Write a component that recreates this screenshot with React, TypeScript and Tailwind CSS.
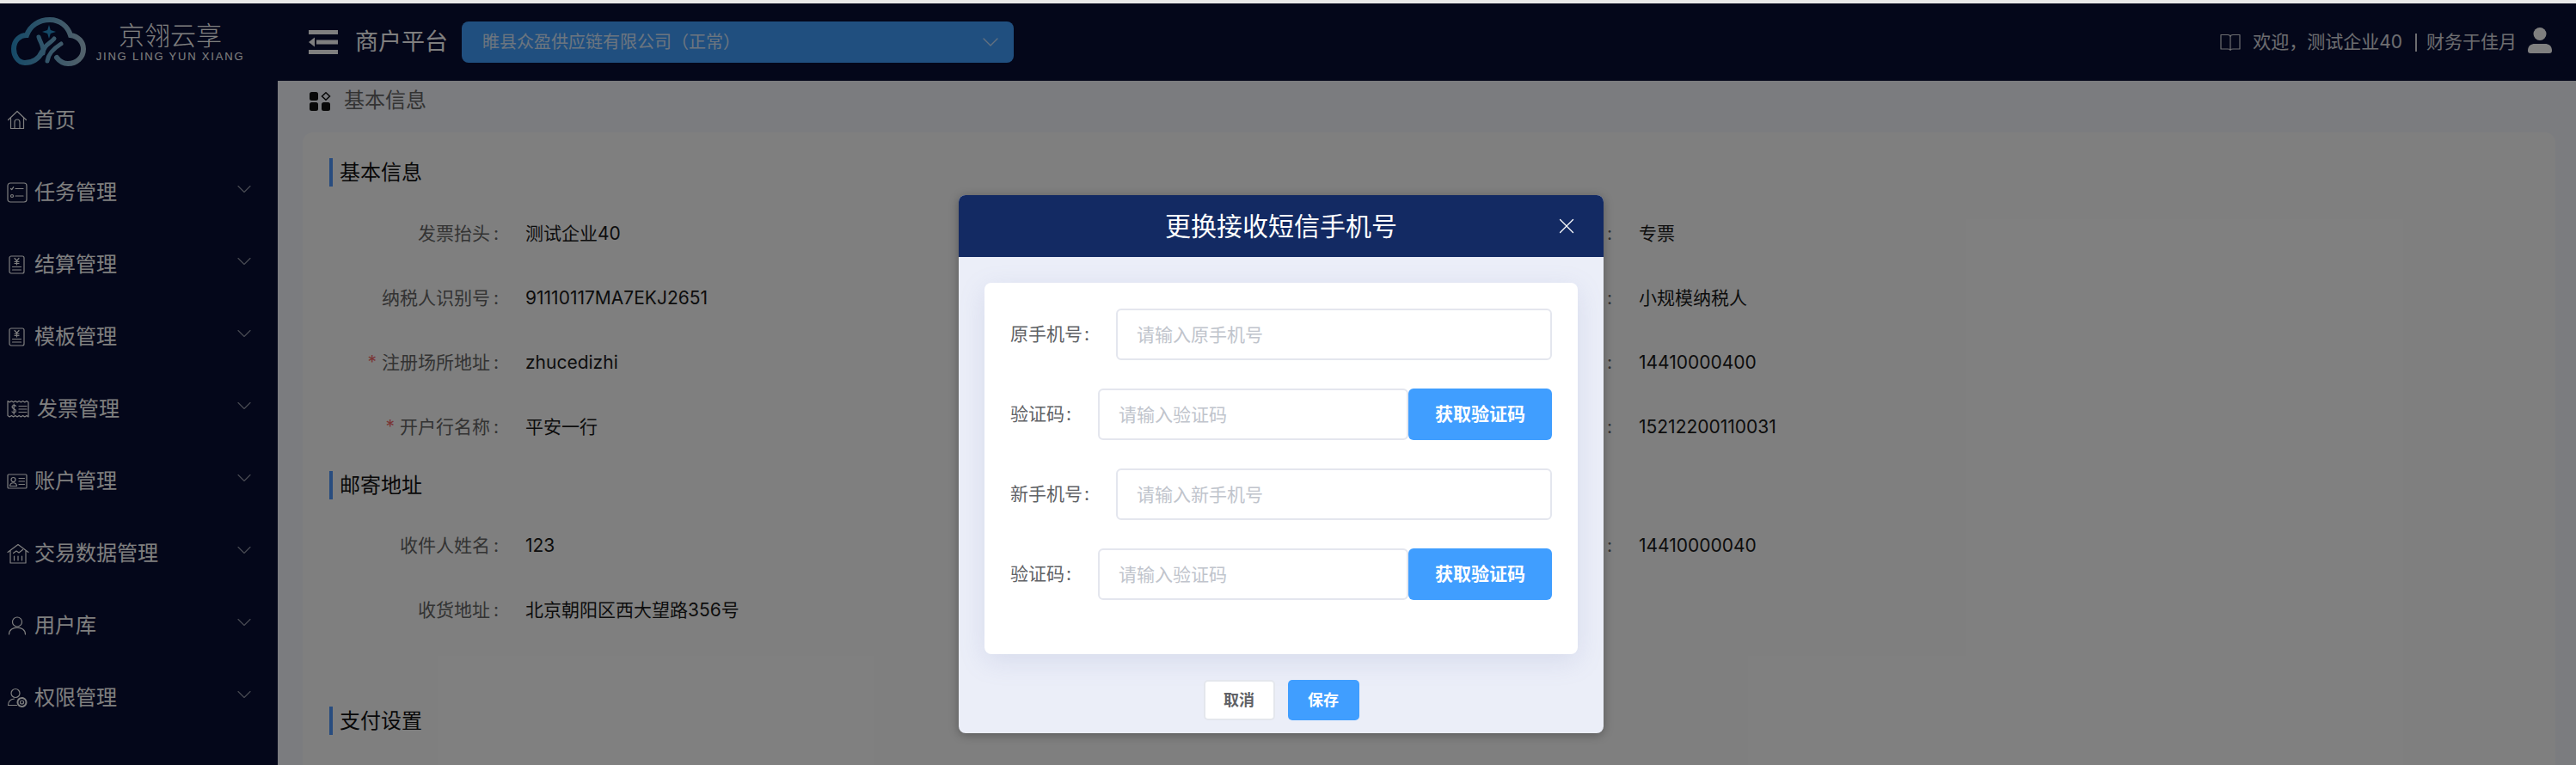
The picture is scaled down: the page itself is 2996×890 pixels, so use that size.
import { ChevronDown, X } from "lucide-react";

const stroke = { fill: "none", stroke: "currentColor", strokeWidth: 1.2, strokeLinecap: "round" as const, strokeLinejoin: "round" as const };

const HomeIcon = () => (
  <svg width="24" height="24" viewBox="0 0 24 24" {...stroke}>
    <path d="M1.5 11.5 12 1.5l10.5 10M4.5 9.5V21.500h15V9.500" />
    <path d="M9 21.500V14a3 3 0 0 1 6 0v7.500" />
  </svg>
);
const TaskIcon = () => (
  <svg width="24" height="24" viewBox="0 0 24 24" {...stroke}>
    <rect x="1" y="1" width="22" height="22" rx="3" />
    <path d="m4.500 7.500 1.200 1.200 2-3M10 7.500h9M10 16h9" />
    <circle cx="6" cy="16" r="1.500" />
  </svg>
);
const BillIcon = () => (
  <svg width="24" height="24" viewBox="0 0 24 24" {...stroke}>
    <rect x="3" y="2" width="17" height="20" rx="2" />
    <path d="m9 4.500 2.500 3 2.500-3M11.500 7.500v4.500M9 8.500h5M9 10.500h5M6.500 14.500h10M6.500 18h10" />
  </svg>
);
const InvoiceIcon = () => (
  <svg width="28" height="24" viewBox="0 0 28 24" {...stroke}>
    <path d="M1 2.500l2.200 1.500 2.200-1.500 2.200 1.500 2.200-1.500 2.200 1.500 2.200-1.500 2.200 1.500 2.200-1.500 2.200 1.500 2.200-1.500 2 1.500v17l-2-1.500-2.200 1.500-2.200-1.500-2.200 1.500-2.200-1.500-2.200 1.500-2.200-1.500-2.200 1.500-2.200-1.500-2.200 1.500-2.200-1.500z" />
    <path d="M10.500 8.500C9.500 7 6 7 6 9.500s4.500 2 4.500 4.500-3.500 2.500-4.500 1M8.200 6v12M14 8.500h9M14 12h9M14 15.500h9" />
  </svg>
);
const AccountIcon = () => (
  <svg width="24" height="24" viewBox="0 0 24 24" {...stroke}>
    <rect x="1" y="4" width="22" height="16" rx="1" />
    <circle cx="7.500" cy="10" r="2.500" />
    <path d="M3.500 17.500c.5-5 7.500-5 8 0zM14 8.500h6.500M14 12h6.500M14 15.500h6.500" />
  </svg>
);
const TradeIcon = () => (
  <svg width="26" height="24" viewBox="0 0 26 24" {...stroke}>
    <path d="M1 10.500 13 1.500l12 9M4 8.500V23h18V8.500" />
    <path d="M7.500 11.500l3.500-2.500 3 2 4.500-3.500M8.500 20v-5M13 20v-5M17.500 20v-5" />
  </svg>
);
const UserIcon = () => (
  <svg width="24" height="24" viewBox="0 0 24 24" {...stroke}>
    <circle cx="12" cy="7.500" r="5.500" />
    <path d="M2.500 22c0-10.500 19-10.500 19 0" />
  </svg>
);
const RoleIcon = () => (
  <svg width="24" height="24" viewBox="0 0 24 24" {...stroke}>
    <circle cx="10" cy="6.500" r="5" />
    <path d="M1.500 20.500c0-5 3-7 7-7.500M1.500 20.500h10" />
    <circle cx="17.500" cy="17" r="5" strokeDasharray="2.500 1" strokeWidth="2" />
    <circle cx="17.500" cy="17" r="2" />
  </svg>
);
const BookIcon = () => (
  <svg width="24" height="22" viewBox="0 0 24 22" {...stroke}>
    <path d="M1 2.500h8c1.700 0 3 1 3 2.500v15.500c0-1-1.300-1.500-3-1.500H1zM23 2.500h-8c-1.700 0-3 1-3 2.500M23 2.500V19h-8c-1.700 0-3 .5-3 1.500" />
  </svg>
);
const PersonSolid = () => (
  <svg width="28" height="30" viewBox="0 0 28 30" fill="currentColor">
    <circle cx="14" cy="7.500" r="7.500" />
    <path d="M0 27c0-6 4-8 8-8h12c4 0 8 2 8 8 0 2-1 3-3 3H3c-2 0-3-1-3-3z" />
  </svg>
);
const MenuFold = () => (
  <svg width="34" height="28" viewBox="0 0 34 28" fill="currentColor">
    <rect x="0" y="0" width="34" height="5" />
    <rect x="9" y="11.500" width="25" height="5" />
    <rect x="0" y="23" width="34" height="5" />
    <path d="M7 8.500v11L0 14z" />
  </svg>
);
const GridIcon = () => (
  <svg width="25" height="22" viewBox="0 0 25 22" fill="currentColor">
    <rect x="0" y="0" width="10" height="10" rx="2.500" />
    <rect x="0" y="12" width="10" height="10" rx="2.500" />
    <rect x="14" y="12" width="10" height="10" rx="2.500" />
    <path d="M19 .8 23.500 5 19 9.200 14.500 5z" fill="none" stroke="currentColor" strokeWidth="1.500" />
  </svg>
);
const Logo = () => (
  <svg width="88" height="58" viewBox="0 0 88 58" fill="none" strokeLinecap="round">
    <defs>
      <linearGradient id="cloud" x1="0" y1="0" x2="88" y2="0" gradientUnits="userSpaceOnUse">
        <stop offset="0" stopColor="#2a93cf" />
        <stop offset="1" stopColor="#a9c4d6" />
      </linearGradient>
    </defs>
    <path
      d="M36 40C32 49 24 53 16 53C8 53 3 45 3 37C3 27 10 21 18 21C22 10 32 3 45 3C57 3 66 11 69 21C78 22 84 29 84 37C84 47 76 54 66 54C60 54 56 51 53 47"
      stroke="url(#cloud)"
      strokeWidth="6"
    />
    <path d="M32 23C34 30 38 33 37 42M50 25C45 31 38 32 37 42M42 51C43 43 50 36 58 31" stroke="url(#cloud)" strokeWidth="5" />
    <path d="M44 9l1.800 6 6.200 2-6.200 2-1.800 6-1.800-6-6.200-2 6.200-2z" fill="#2a93cf" />
  </svg>
);

const navItems = [
  { label: "首页", icon: <HomeIcon /> },
  { label: "任务管理", icon: <TaskIcon />, arrow: true },
  { label: "结算管理", icon: <BillIcon />, arrow: true },
  { label: "模板管理", icon: <BillIcon />, arrow: true },
  { label: "发票管理", icon: <InvoiceIcon />, arrow: true, wide: true },
  { label: "账户管理", icon: <AccountIcon />, arrow: true },
  { label: "交易数据管理", icon: <TradeIcon />, arrow: true },
  { label: "用户库", icon: <UserIcon />, arrow: true },
  { label: "权限管理", icon: <RoleIcon />, arrow: true },
];

function Section({ title }: { title: string }) {
  return (
    <div className="h-[33px] flex items-center border-l-[4px] border-[#5099ff] pl-[8px] text-[24px] text-[#111]">
      {title}
    </div>
  );
}

function Field({ label, value, required }: { label?: string; value: string; required?: boolean }) {
  return (
    <div className="h-[75px] flex items-center text-[21px]">
      <div className="w-[197px] flex justify-end text-[#666] whitespace-nowrap">
        {required && <span className="text-[#f56c6c] mr-[6px]">*</span>}
        {label}
        <span className="ml-[4px]">:</span>
      </div>
      <div className="ml-[31px] text-[#1a1a1a] whitespace-nowrap">{value}</div>
    </div>
  );
}

function ModalRow({ label, placeholder, code }: { label: string; placeholder: string; code?: boolean }) {
  return (
    <div className="flex items-center h-[60px]">
      <span className="text-[21px] text-[#606266] whitespace-nowrap mr-[31px]">
        {label}
        <span className="ml-[2px]">:</span>
      </span>
      <input
        placeholder={placeholder}
        className="flex-1 min-w-0 h-full bg-white border-2 border-[#e4e6ee] rounded-[6px] px-[22px] text-[21px] outline-none placeholder:text-[#c0c4cc]"
      />
      {code && (
        <button className="w-[167px] h-full shrink-0 bg-[#409eff] rounded-[6px] text-white text-[21px] font-bold">
          获取验证码
        </button>
      )}
    </div>
  );
}

export default function App() {
  return (
    <div className="w-[2996px] h-[890px] overflow-hidden bg-[#e9e9e9] pt-[4px] font-['Inter','Noto_Sans_CJK_SC',sans-serif]">
      <div className="relative h-[886px] overflow-hidden flex flex-col bg-[#f6f8fe]">
        {/* top bar */}
        <header className="h-[90px] shrink-0 bg-[#080e34] flex items-center text-white">
          <div className="w-[323px] shrink-0 flex items-center pl-[13px]">
            <Logo />
            <div className="ml-[12px] w-[170px] flex flex-col items-center -mt-[4px]">
              <span className="text-[30px] leading-[38px] whitespace-nowrap font-['Noto_Sans_CJK_SC',sans-serif] font-light">京翎云享</span>
              <span className="text-[13px] leading-[16px] tracking-[1.800px] whitespace-nowrap font-['Liberation_Sans',sans-serif]">JING LING YUN XIANG</span>
            </div>
          </div>
          <div className="ml-[36px]">
            <MenuFold />
          </div>
          <span className="ml-[20px] text-[27px] whitespace-nowrap">商户平台</span>
          <div className="ml-[16px] w-[642px] h-[48px] bg-[#409eff] rounded-[8px] flex items-center justify-between pl-[24px] pr-[11px] text-[20px]">
            <span className="opacity-80">睢县众盈供应链有限公司（正常）</span>
            <ChevronDown size={32} strokeWidth={1} className="opacity-70" />
          </div>
          <div className="ml-auto pr-[28px] flex items-center text-[21px] text-white/85">
            <BookIcon />
            <span className="ml-[14px] whitespace-nowrap">欢迎，测试企业40</span>
            <span className="ml-[15px] mr-[11px] w-[2px] h-[21px] bg-white/85" />
            <span className="whitespace-nowrap">财务于佳月</span>
            <span className="ml-[13px] -mt-[4px] text-white">
              <PersonSolid />
            </span>
          </div>
        </header>

        <div className="flex flex-1 min-h-0">
          {/* sidebar */}
          <aside className="w-[323px] shrink-0 bg-[#080e34] pt-[4px] text-white">
            {navItems.map((item) => (
              <div key={item.label} className="h-[84px] flex items-center pl-[8px] pr-[25px]">
                <span className={item.wide ? "w-[35px] shrink-0" : "w-[32px] shrink-0"}>{item.icon}</span>
                <span className="text-[24px] whitespace-nowrap">{item.label}</span>
                {item.arrow && <ChevronDown size={28} strokeWidth={1} className="ml-auto -mt-[8px] text-white/55" />}
              </div>
            ))}
          </aside>

          {/* content */}
          <main className="flex-1 min-w-0 pl-[29px] pr-[24px] flex flex-col">
            <div className="h-[60px] shrink-0 flex items-start pl-[8px] pt-[12px] text-[#666]">
              <span className="text-[#111] mt-[1px]">
                <GridIcon />
              </span>
              <span className="ml-[15px] text-[24px] leading-[22px]">基本信息</span>
            </div>
            <section className="flex-1 bg-white rounded-t-[12px] pt-[30px] pl-[31px]">
              <Section title="基本信息" />
              <div className="grid grid-cols-[1295px_1fr] mt-[17px] mb-[14px]">
                <Field label="发票抬头" value="测试企业40" />
                <Field value="专票" />
                <Field label="纳税人识别号" value="91110117MA7EKJ2651" />
                <Field value="小规模纳税人" />
                <Field label="注册场所地址" value="zhucedizhi" required />
                <Field value="14410000400" />
                <Field label="开户行名称" value="平安一行" required />
                <Field value="15212200110031" />
              </div>
              <Section title="邮寄地址" />
              <div className="grid grid-cols-[1295px_1fr] mt-[16px]">
                <Field label="收件人姓名" value="123" />
                <Field value="14410000040" />
                <Field label="收货地址" value="北京朝阳区西大望路356号" />
                <div className="h-[75px]" />
                <div className="h-[75px]" />
              </div>
              <Section title="支付设置" />
            </section>
          </main>
        </div>

        {/* dialog */}
        <div className="absolute inset-0 bg-black/50 pl-[1115px] pt-[223px]">
          <div className="w-[750px] h-[626px] bg-[#ebeef8] rounded-[8px] overflow-hidden shadow-[0_2px_12px_rgba(0,0,0,0.3)]">
            <div className="relative h-[72px] bg-[#132a63] flex items-center justify-center text-white text-[30px]">
              更换接收短信手机号
              <X size={30} strokeWidth={1} className="absolute right-[28px] top-[21px]" />
            </div>
            <div className="mx-[30px] mt-[30px] h-[432px] bg-white rounded-[8px] px-[30px] pt-[30px] flex flex-col gap-[33px] shadow-[0_8px_30px_rgba(120,135,190,0.18)]">
              <ModalRow label="原手机号" placeholder="请输入原手机号" />
              <ModalRow label="验证码" placeholder="请输入验证码" code />
              <ModalRow label="新手机号" placeholder="请输入新手机号" />
              <ModalRow label="验证码" placeholder="请输入验证码" code />
            </div>
            <div className="mt-[30px] flex justify-center gap-[15px]">
              <button className="w-[83px] h-[47px] bg-white border-2 border-[#e4e7ed] rounded-[5px] text-[18px] font-bold text-[#606266]">取消</button>
              <button className="w-[83px] h-[47px] bg-[#409eff] rounded-[5px] text-[18px] font-bold text-white">保存</button>
            </div>
          </div>
        </div>
      </div>
    </div>
  );
}
